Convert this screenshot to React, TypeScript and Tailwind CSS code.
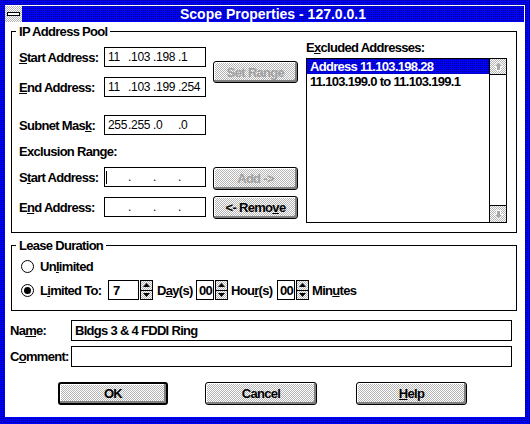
import type { ReactNode } from "react";

const FONT = "font-['Liberation_Sans',Arial,sans-serif]";
const BLUE = "bg-[repeating-conic-gradient(#000080_0_25%,#0000ff_0_100%)] bg-[length:2px_2px]";
const GRAY = "bg-[repeating-conic-gradient(#ffffff_0_25%,#b4b4b4_0_50%)] bg-[length:2px_2px]";
const LBL = "text-[13px] leading-[15px] font-bold tracking-[-0.7px]";

function IpEdit({ parts, caret }: { parts: string[]; caret?: boolean }) {
  return (
    <div className="flex h-[20px] w-[102px] items-center border border-black bg-white pl-[3px] text-[12px] leading-[14px] tracking-[-0.3px]">
      <span className="flex w-[20px] items-center">
        {caret ? <span className="-ml-[2px] h-[13px] w-px bg-black" /> : parts[0]}
      </span>
      <span className="w-[25px]">.{parts[1]}</span>
      <span className="w-[25px]">.{parts[2]}</span>
      <span>.{parts[3]}</span>
    </div>
  );
}

function Field({ label, children, className = "" }: { label: ReactNode; children: ReactNode; className?: string }) {
  return (
    <div className={`flex items-center ${className}`}>
      <span className={`w-[85px] ${LBL}`}>{label}</span>
      {children}
    </div>
  );
}

function Btn({
  children,
  className = "",
  disabled,
  primary,
}: {
  children: ReactNode;
  className?: string;
  disabled?: boolean;
  primary?: boolean;
}) {
  return (
    <div
      className={`flex items-center justify-center rounded-[3px] border-black ${primary ? "border-2" : "border"} ${GRAY} shadow-[inset_-2px_-2px_0_#808080,inset_1px_1px_0_#ffffff] ${LBL} ${disabled ? "text-[#a0a0a0]" : "text-black"} ${className}`}
    >
      {children}
    </div>
  );
}

function Spin() {
  return (
    <div className="ml-[1px] flex h-[20px] w-[13px] flex-col border border-black">
      <div className={`flex flex-1 items-center justify-center ${GRAY}`}>
        <svg width="7" height="4" viewBox="0 0 7 4">
          <path d="M3.5 0L7 4H0z" fill="#000" />
        </svg>
      </div>
      <div className="h-px bg-black" />
      <div className={`flex flex-1 items-center justify-center ${GRAY}`}>
        <svg width="7" height="4" viewBox="0 0 7 4">
          <path d="M0 0H7L3.5 4z" fill="#000" />
        </svg>
      </div>
    </div>
  );
}

function Radio({ on }: { on?: boolean }) {
  return (
    <div className="flex h-[13px] w-[13px] items-center justify-center rounded-full border border-black bg-white">
      {on && <div className="h-[7px] w-[7px] rounded-full bg-black" />}
    </div>
  );
}

function ScrollArrow({ down }: { down?: boolean }) {
  return (
    <svg width="11" height="11" viewBox="0 0 11 11" className={down ? "rotate-180" : ""}>
      <path d="M5.5 1L10 5.5H7.5V9.5H3.5V5.5H1Z" fill="#a8a8a8" stroke="#ffffff" strokeWidth="1" />
    </svg>
  );
}

export default function App() {
  return (
    <div className={`flex h-[424px] w-[530px] flex-col pt-[5px] pr-[5px] pb-[7px] pl-[5px] text-black ${BLUE} ${FONT}`}>
      {/* title bar */}
      <div className="flex h-[17px] border-t border-r border-white">
        <div className={`flex h-full w-[17px] items-center justify-center ${GRAY}`}>
          <div className="h-[4px] w-[13px] border border-black bg-white" />
        </div>
        <div className="flex-1 text-center text-[14px] leading-[16px] font-bold text-white">
          Scope Properties - 127.0.0.1
        </div>
      </div>

      <div className="flex flex-1 flex-col bg-white">
        <fieldset className="mt-[2px] ml-[6px] w-[506px] border border-black">
          <legend className={`ml-[4px] px-[3px] ${LBL}`}>IP Address Pool</legend>
          <div className="flex pb-[9px] pl-[7px]">
            <div className="flex flex-col">
              <div className="mt-[8px] flex items-center">
                <div className="flex flex-col gap-[10px]">
                  <Field label={<><u>S</u>tart Address:</>}>
                    <IpEdit parts={["11", "103", "198", "1"]} />
                  </Field>
                  <Field label={<><u>E</u>nd Address:</>}>
                    <IpEdit parts={["11", "103", "199", "254"]} />
                  </Field>
                </div>
                <Btn disabled className="ml-[7px] h-[22px] w-[85px]">
                  Set Range
                </Btn>
              </div>
              <Field className="mt-[18px]" label={<>Subnet Mas<u>k</u>:</>}>
                <IpEdit parts={["255", "255", "0", "0"]} />
              </Field>
              <div className={`mt-[9px] ${LBL}`}>Exclusion Range:</div>
              <div className="mt-[8px] flex items-start">
                <Field label={<>S<u>t</u>art Address:</>}>
                  <IpEdit parts={["", "", "", ""]} caret />
                </Field>
                <Btn disabled className="ml-[7px] h-[23px] w-[85px]">
                  Add -&gt;
                </Btn>
              </div>
              <div className="mt-[7px] flex items-start">
                <Field label={<>E<u>n</u>d Address:</>}>
                  <IpEdit parts={["", "", "", ""]} />
                </Field>
                <Btn className="-mt-[1px] ml-[7px] h-[23px] w-[85px]">
                  &lt;- Remo<u>v</u>e
                </Btn>
              </div>
            </div>

            <div className="ml-[8px] flex w-[201px] flex-col">
              <span className={`mt-[1px] ${LBL}`}>
                E<u>x</u>cluded Addresses:
              </span>
              <div className="mt-[3px] flex h-[165px] border border-black bg-white">
                <div className="flex-1">
                  <div className={`pl-[3px] text-white ${BLUE} ${LBL} leading-[14px]`}>Address 11.103.198.28</div>
                  <div className={`pl-[3px] ${LBL} leading-[14px]`}>11.103.199.0 to 11.103.199.1</div>
                </div>
                <div className="flex w-[17px] flex-col border-l border-black">
                  <div className={`flex h-[16px] items-center justify-center border-b border-black ${GRAY}`}>
                    <ScrollArrow />
                  </div>
                  <div className="flex-1" />
                  <div className={`flex h-[17px] items-center justify-center border-t border-black ${GRAY}`}>
                    <ScrollArrow down />
                  </div>
                </div>
              </div>
            </div>
          </div>
        </fieldset>

        <fieldset className="mt-[5px] ml-[6px] w-[506px] border border-black">
          <legend className={`ml-[4px] px-[3px] ${LBL}`}>Lease Duration</legend>
          <div className="flex flex-col pb-[10px] pl-[9px]">
            <div className="mt-[6px] flex h-[15px] items-center">
              <Radio />
              <span className={`ml-[6px] ${LBL}`}>
                Un<u>l</u>imited
              </span>
            </div>
            <div className="mt-[6px] flex items-center">
              <Radio on />
              <span className={`ml-[6px] w-[68px] ${LBL}`}>
                L<u>i</u>mited To:
              </span>
              <div className={`flex h-[20px] w-[31px] items-center border border-black bg-white pl-[4px] ${LBL}`}>7</div>
              <Spin />
              <span className={`ml-[4px] w-[39px] ${LBL}`}>
                D<u>a</u>y(s)
              </span>
              <div className={`flex h-[20px] w-[18px] items-center border border-black bg-white pl-[2px] ${LBL}`}>00</div>
              <Spin />
              <span className={`ml-[3px] w-[46px] ${LBL}`}>
                Hou<u>r</u>(s)
              </span>
              <div className={`flex h-[20px] w-[18px] items-center border border-black bg-white pl-[2px] ${LBL}`}>00</div>
              <Spin />
              <span className={`ml-[3px] ${LBL}`}>
                Min<u>u</u>tes
              </span>
            </div>
          </div>
        </fieldset>

        <div className="mt-[9px] ml-[5px] flex items-center">
          <span className={`w-[61px] ${LBL}`}>
            Na<u>m</u>e:
          </span>
          <div className={`flex h-[21px] w-[441px] items-center border border-black bg-white pl-[3px] ${LBL}`}>
            Bldgs 3 &amp; 4 FDDI Ring
          </div>
        </div>
        <div className="mt-[5px] ml-[5px] flex items-center">
          <span className={`w-[61px] ${LBL}`}>
            C<u>o</u>mment:
          </span>
          <div className="h-[21px] w-[441px] border border-black bg-white" />
        </div>

        <div className="mt-[15px] flex pl-[53px]">
          <Btn primary className="h-[23px] w-[110px]">
            OK
          </Btn>
          <Btn className="ml-[37px] h-[23px] w-[112px]">Cancel</Btn>
          <Btn className="ml-[39px] h-[23px] w-[111px]">
            <u>H</u>elp
          </Btn>
        </div>
      </div>
    </div>
  );
}
